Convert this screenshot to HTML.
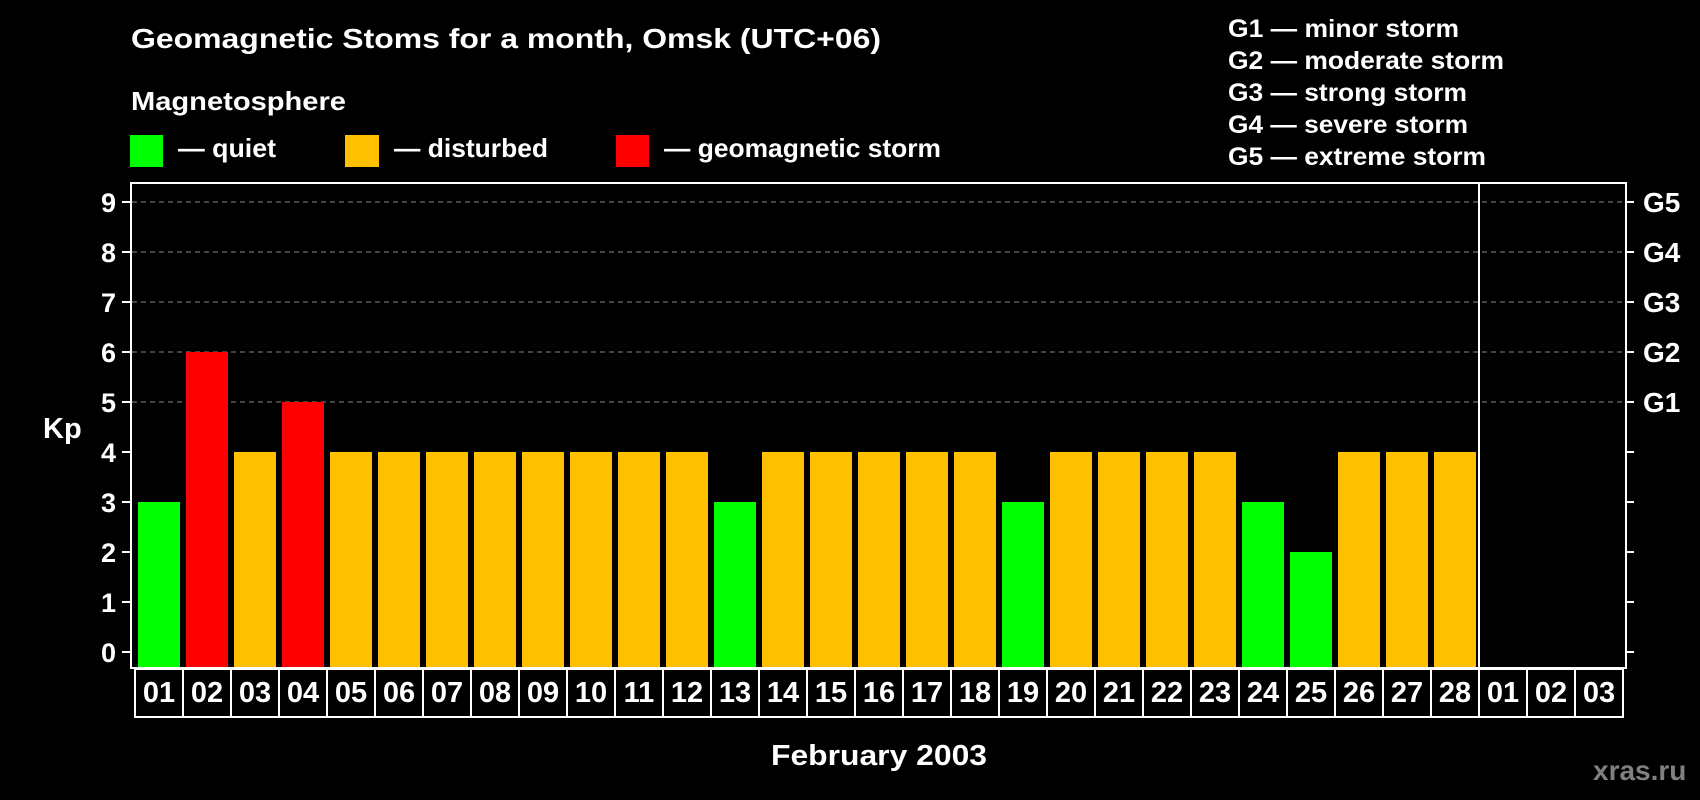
<!DOCTYPE html>
<html><head><meta charset="utf-8"><style>
html,body{margin:0;padding:0;background:#000;}
svg{display:block;}
text{font-family:"Liberation Sans",Arial,sans-serif;font-weight:bold;fill:#fff;}
</style></head><body>
<svg width="1700" height="800" viewBox="0 0 1700 800" xmlns="http://www.w3.org/2000/svg">
<rect width="1700" height="800" fill="#000"/>
<text x="131" y="48" font-size="28" textLength="750" lengthAdjust="spacingAndGlyphs">Geomagnetic Stoms for a month, Omsk (UTC+06)</text>
<text x="131" y="110" font-size="26" textLength="215" lengthAdjust="spacingAndGlyphs">Magnetosphere</text>
<rect x="130" y="135" width="33" height="32" fill="#00ff00"/>
<text x="178" y="157" font-size="26" textLength="98" lengthAdjust="spacingAndGlyphs">— quiet</text>
<rect x="345" y="135" width="34" height="32" fill="#ffc000"/>
<text x="394" y="157" font-size="26" textLength="154" lengthAdjust="spacingAndGlyphs">— disturbed</text>
<rect x="616" y="135" width="33" height="32" fill="#ff0000"/>
<text x="664" y="157" font-size="26" textLength="277" lengthAdjust="spacingAndGlyphs">— geomagnetic storm</text>
<g font-size="25">
<text x="1228" y="37" textLength="231" lengthAdjust="spacingAndGlyphs">G1 — minor storm</text>
<text x="1228" y="69" textLength="276" lengthAdjust="spacingAndGlyphs">G2 — moderate storm</text>
<text x="1228" y="101" textLength="239" lengthAdjust="spacingAndGlyphs">G3 — strong storm</text>
<text x="1228" y="133" textLength="240" lengthAdjust="spacingAndGlyphs">G4 — severe storm</text>
<text x="1228" y="165" textLength="258" lengthAdjust="spacingAndGlyphs">G5 — extreme storm</text>
</g>
<g stroke="#888" stroke-width="1" stroke-dasharray="5,4">
<line x1="132" y1="202" x2="1625" y2="202"/>
<line x1="132" y1="252" x2="1625" y2="252"/>
<line x1="132" y1="302" x2="1625" y2="302"/>
<line x1="132" y1="352" x2="1625" y2="352"/>
<line x1="132" y1="402" x2="1625" y2="402"/>
</g>
<g id="bars"></g>
<g stroke="#fff" stroke-width="2" fill="none">
<rect x="131" y="183" width="1495" height="485"/>
<line x1="1479" y1="183" x2="1479" y2="668"/>
</g>
<g stroke="#fff" stroke-width="2" id="ticks"></g>
<g font-size="27" text-anchor="end" id="ylab"></g>
<text x="43" y="438" font-size="29">Kp</text>
<g font-size="28">
<text x="1643" y="212">G5</text>
<text x="1643" y="262">G4</text>
<text x="1643" y="312">G3</text>
<text x="1643" y="362">G2</text>
<text x="1643" y="412">G1</text>
</g>
<g id="tbl"></g>
<text x="771" y="765" font-size="29" textLength="216" lengthAdjust="spacingAndGlyphs">February 2003</text>
<text x="1593" y="780" font-size="28" style="fill:#808080">xras.ru</text>
<script>
var ns="http://www.w3.org/2000/svg";
var kp=[3,6,4,5,4,4,4,4,4,4,4,4,3,4,4,4,4,4,3,4,4,4,4,3,2,4,4,4];
var b=document.getElementById("bars");
kp.forEach(function(v,i){var r=document.createElementNS(ns,"rect");
var h=v*50+15;r.setAttribute("x",138+i*48);r.setAttribute("y",667-h);r.setAttribute("width",42);r.setAttribute("height",h);
r.setAttribute("fill",v<=3?"#00ff00":(v==4?"#ffc000":"#ff0000"));b.appendChild(r);});
var t=document.getElementById("ticks"),yl=document.getElementById("ylab");
for(var k=0;k<=9;k++){var y=652-k*50;
var l=document.createElementNS(ns,"line");l.setAttribute("x1",122);l.setAttribute("x2",131);l.setAttribute("y1",y);l.setAttribute("y2",y);t.appendChild(l);
var l2=document.createElementNS(ns,"line");l2.setAttribute("x1",1626);l2.setAttribute("x2",1634);l2.setAttribute("y1",y);l2.setAttribute("y2",y);t.appendChild(l2);
var tx=document.createElementNS(ns,"text");tx.setAttribute("x",116);tx.setAttribute("y",y+10);tx.textContent=k;yl.appendChild(tx);}
var tb=document.getElementById("tbl");
for(var i=0;i<31;i++){var x=135+i*48;
var r=document.createElementNS(ns,"rect");r.setAttribute("x",x);r.setAttribute("y",669);r.setAttribute("width",48);r.setAttribute("height",48);
r.setAttribute("fill","none");r.setAttribute("stroke","#fff");r.setAttribute("stroke-width","2");tb.appendChild(r);
var d=i<28?i+1:i-27;var s=(d<10?"0":"")+d;
var tx=document.createElementNS(ns,"text");tx.setAttribute("x",x+24);tx.setAttribute("y",702);tx.setAttribute("text-anchor","middle");tx.setAttribute("font-size","29");tx.textContent=s;tb.appendChild(tx);}
</script>
</svg>
</body></html>
